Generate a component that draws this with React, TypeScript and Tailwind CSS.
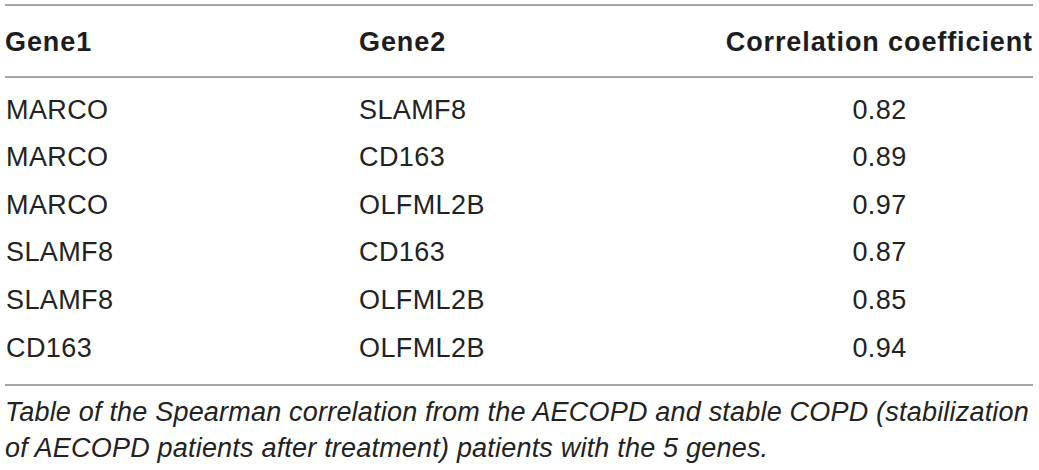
import React from "react";

const rows: [string, string, string][] = [
  ["MARCO", "SLAMF8", "0.82"],
  ["MARCO", "CD163", "0.89"],
  ["MARCO", "OLFML2B", "0.97"],
  ["SLAMF8", "CD163", "0.87"],
  ["SLAMF8", "OLFML2B", "0.85"],
  ["CD163", "OLFML2B", "0.94"],
];

export default function App() {
  return (
    <div className="w-[1039px] h-[470px] bg-white overflow-hidden font-['Liberation_Sans',Arial,sans-serif] text-[#222]">
      <div className="ml-[5px] w-[1028px] pt-[4px]">
        <div className="h-[2px] bg-[#a5a5a5]" />
        <div className="grid grid-cols-[354px_1fr_auto] pt-[13px] pb-[9px] text-[27px] leading-[47.6px] font-bold tracking-[0.9px] text-[#1d1d1d]">
          <div>Gene1</div>
          <div>Gene2</div>
          <div className="text-right">Correlation coefficient</div>
        </div>
        <div className="h-[2px] bg-[#a5a5a5]" />
        <div className="grid grid-cols-[354px_1fr_auto] pt-[9px] pb-[12px] text-[27px] leading-[47.6px] tracking-[0.4px]">
          {rows.map(([a, b, c], i) => (
            <React.Fragment key={i}>
              <div className="pl-[1px]">{a}</div>
              <div>{b}</div>
              <div className="w-[307px] text-center">{c}</div>
            </React.Fragment>
          ))}
        </div>
        <div className="h-[2px] bg-[#a5a5a5]" />
        <p className="mt-[8px] text-[27px] leading-[36px] italic tracking-[0.2px] whitespace-nowrap">
          Table of the Spearman correlation from the AECOPD and stable COPD (stabilization
          <br />
          of AECOPD patients after treatment) patients with the 5 genes.
        </p>
      </div>
    </div>
  );
}
